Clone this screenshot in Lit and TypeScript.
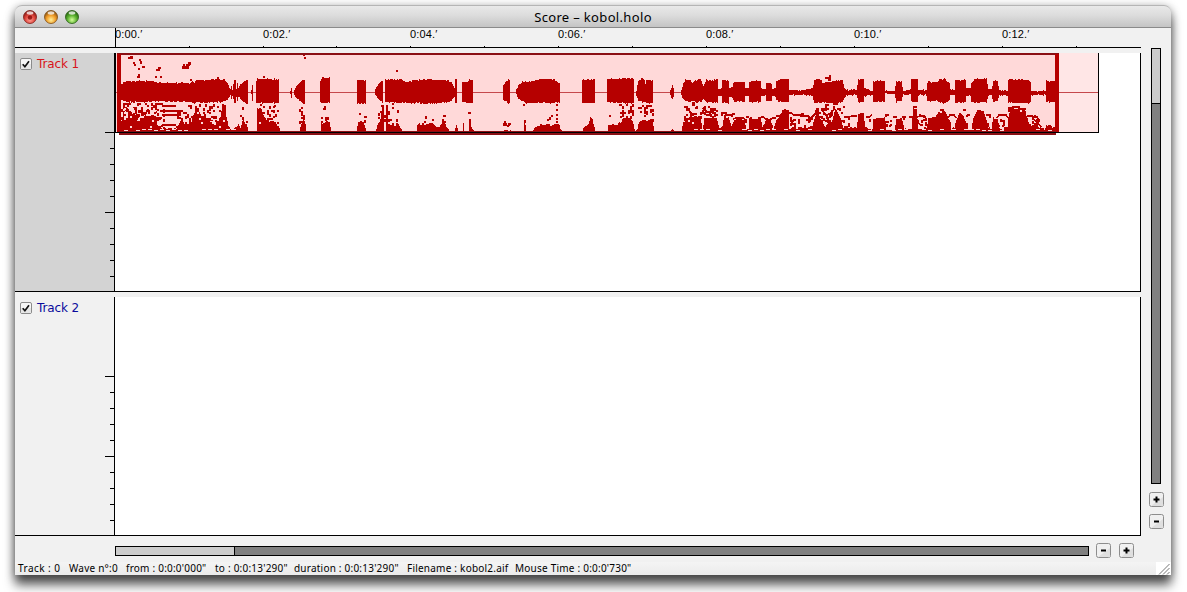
import { LitElement, html, css, svg } from "lit";
import { customElement, property } from "lit/decorators.js";

// Amplitude envelope: runs of (x, top, bottom) points, one run per burst of sound.
const ENVELOPE: number[][] = [
  [120,89,96, 121,85,100, 124,82,101, 127,81,102, 150,81,102, 157,83,101, 190,83,102, 192,81,103, 194,82,103, 195,80,102, 205,80,103, 218,79,102, 224,80,102, 227,83,100, 229,88,97, 230,89,95, 231,86,99, 232,90,95, 233,84,99, 234,80,103, 235,81,103, 236,89,97, 237,83,101, 238,88,97, 240,84,99, 242,83,101, 246,80,103, 248,80,103],
  [251,90,94, 252,84,101, 253,90,94],
  [256,81,103, 257,79,103, 279,79,103],
  [290,91,94, 291,88,98, 292,91,94],
  [294,90,95, 296,86,98, 299,83,100, 302,80,103, 303,80,104, 305,80,103],
  [320,80,102, 322,78,103, 329,78,103, 330,81,101],
  [357,80,104, 365,80,103, 366,82,102],
  [375,89,95, 378,84,99, 380,82,101, 383,81,103],
  [385,80,102, 400,79,103, 405,82,103, 418,80,103, 425,79,104, 440,80,103, 447,80,102, 451,83,101, 455,90,96],
  [455,79,103, 457,79,103],
  [462,82,102, 467,82,103, 469,80,103, 473,80,103],
  [503,85,100, 505,82,101, 508,80,103, 510,80,103],
  [516,90,95, 518,85,99, 523,81,102, 526,82,103, 540,79,103, 553,79,103, 558,82,102, 560,84,103],
  [582,80,103, 595,79,103],
  [607,79,102, 621,79,103, 622,78,103, 634,79,103],
  [636,90,96, 638,81,101, 642,78,102, 644,79,102, 645,84,102, 646,80,103, 653,80,103],
  [670,90,96, 672,84,100, 674,91,94],
  [681,90,95, 683,84,99, 685,80,101, 690,80,102, 692,83,101, 695,80,102, 701,80,102, 703,86,99, 706,80,102, 717,80,103, 718,89,96, 721,88,96, 722,80,103, 728,80,103, 729,88,97, 732,87,97, 733,83,100, 734,82,102, 744,82,102, 745,88,96, 748,88,96, 749,81,102, 760,81,102, 761,88,96, 765,89,96, 766,83,101, 771,83,101, 772,88,96, 775,88,96, 776,81,100, 779,79,102, 788,79,102, 789,90,95, 805,90,95, 812,88,96, 814,80,103, 820,79,103, 822,83,103, 835,81,103, 842,80,102, 844,88,98, 846,90,95, 856,90,95, 858,80,102, 863,79,102, 864,88,96, 872,91,95, 873,81,102, 884,81,102, 885,91,94, 894,91,94, 896,81,102, 901,82,101, 903,91,95, 910,90,95, 911,79,102, 917,79,102, 918,90,95, 926,90,95, 927,82,101, 937,82,101, 939,79,103, 944,79,103, 949,83,100, 950,89,96, 954,90,95, 955,80,103, 965,80,102, 966,88,96, 970,88,96, 971,82,102, 975,79,103, 986,79,102, 988,89,95, 991,89,95, 993,81,102, 997,81,101, 999,90,95, 1007,91,95, 1008,79,103, 1028,80,103, 1030,82,102, 1031,91,95, 1045,91,95, 1046,81,102, 1056,81,102],
];

// Top edge of the filled spectrum along the bottom of the clip: (x, y) pairs.
const SPECTRUM = [
  120,122, 123,118, 125,111, 127,107, 130,114, 134,124, 140,121, 145,116, 150,118, 155,121, 160,129, 176,129, 180,121, 186,124, 191,121, 195,108, 200,114, 205,115, 208,120, 215,125, 220,118, 222,105, 225,104, 226,118, 228,126, 232,129, 238,125, 240,128, 243,119, 246,125, 248,131, 256,131, 257,108, 261,110, 264,118, 270,122, 275,122, 279,128, 280,131, 299,131, 301,125, 303,119, 305,124, 306,131,
  320,131, 321,123, 327,121, 329,122, 331,131, 356,131, 358,121, 364,124, 366,131, 375,131, 377,124, 380,121, 382,107, 383,107, 384,131, 385,131, 386,107, 387,109, 388,125, 398,124, 402,131, 416,131, 417,125, 430,124, 438,127, 443,123, 448,128, 449,131, 454,131, 456,124, 458,131, 462,131, 463,124, 464,131, 468,131, 469,119, 470,119, 471,127, 474,131,
  503,131, 504,129, 510,130, 511,131, 523,131, 524,121, 526,131, 532,131, 535,126, 540,125, 558,125, 561,130, 562,131, 582,131, 583,127, 588,123, 590,116, 592,118, 593,123, 595,131, 607,131, 608,124, 618,124, 624,118, 630,117, 634,128, 635,131, 637,128, 640,121, 652,120, 654,131, 670,131, 672,129, 674,131,
  681,131, 683,123, 685,120, 690,117, 700,118, 702,129, 704,119, 716,119, 719,127, 722,125, 724,116, 728,118, 731,127, 734,120, 738,118, 744,119, 746,130, 748,129, 749,118, 760,118, 762,128, 766,119, 770,119, 772,130, 776,120, 780,117, 782,110, 788,110, 789,129, 812,127, 814,119, 816,113, 819,117, 825,126, 832,120, 835,109, 840,118, 843,127, 856,128, 858,115, 863,114, 865,128, 872,129, 873,119, 884,118, 886,130, 894,130, 896,118, 901,118, 904,129, 911,128, 913,108, 916,108, 918,129, 926,128, 928,119, 935,118, 939,112, 944,112, 949,120, 951,129, 954,128, 956,119, 960,112, 965,120, 968,129, 971,128, 973,118, 976,112, 983,112, 986,120, 988,129, 991,128, 993,118, 997,119, 999,129, 1007,129, 1008,118, 1010,108, 1024,111, 1027,118, 1031,127, 1036,125, 1040,128, 1044,129, 1046,125, 1052,127, 1056,125,
];

// Areas of scattered partials: x1, x2, y1, y2, share of cells set.
const CLOUDS = [
  [121,156,103,128,.44],[130,156,110,130,.4],[157,164,103,130,.3],[177,192,110,127,.4],[188,194,103,109,.45],[195,224,104,122,.36],
  [238,247,107,123,.24],[257,279,106,124,.27],[299,305,107,122,.32],[321,329,115,122,.38],[358,366,118,124,.3],[378,389,109,121,.26],
  [390,397,119,124,.3],[440,446,115,122,.2],[503,510,123,129,.16],[620,633,104,119,.48],[638,653,105,121,.3],[684,717,106,119,.33],
  [723,732,112,122,.32],[790,812,117,128,.22],[815,844,106,122,.33],[826,832,116,127,.3],[846,856,116,128,.14],[865,871,117,128,.28],
  [886,894,118,128,.16],[903,911,118,128,.16],[917,926,114,128,.22],[936,948,110,119,.2],[998,1007,117,128,.24],[1010,1026,108,118,.3],[1032,1040,115,127,.3],
];

// Thin partials bridging the gaps between notes.
const PARTIALS = [
  "M162 106h14M160 111h18M162 115h16M159 118h3M177 118h4M162 125h14M158 127h3M176 127h3",
  "M722 116v-3h4v2h5l2 -1h2M733 119l4 -1h6l3 2v3M746 117h3M761 117h2l3 2M771 119l2 -1h3M772 125v3M776 116h3l2 -1",
  "M788 113h3l3 2h5l4 -1h1M800 116h8l2 2v4M812 120v-3l3 -3M792 125v-3l2 -2",
  "M844 117h5l4 -1h4M849 123v4M860 114h4M866 117h3l3 -2M886 117v-2h3M885 122h4M889 126h2M893 117h4M902 117h4M902 122v6M909 117h5",
  "M917 117l4 -1h3l2 1M918 122l3 4M923 120h3M926 122v4M932 118h4M948 118l2 -3h4l2 3M950 122v5M966 117l2 -2h2M967 123v4M986 115h4v3M988 123v4M997 118l2 -3h7l2 3M1000 121h4v5",
  "M1009 112v-4h4v-1h6v2h3l3 3v4M1027 116h5l3 1h3M1034 119l3 4v4M1038 118v5l3 4M822 111l5 4 4 -2 3 -4M817 116l5 2M827 119l5 -3",
  "M684 107h3v3h2l2 4M689 112l4 2h4M695 108h3M703 108l4 4h5v-3h3M706 115h4v-2M833 104h5M825 105h4M815 111h4M816 109h3",
];

// Isolated partials: x, y, w, h.
const DOTS = [
  [128,57,5,2],[130,56,3,1],[133,62,2,2],[134,64,2,2],[139,59,2,2],[140,61,2,3],[142,66,3,2],[138,68,2,2],[138,74,2,2],[137,76,3,2],[158,67,3,2],[156,69,4,2],[155,76,2,2],[160,76,2,2],
  [188,62,3,3],[183,64,2,2],[182,66,7,3],[186,64,4,2],[190,79,2,2],[217,77,2,2],[263,76,2,2],[303,54,2,2],[304,57,2,2],[396,70,2,2],[829,75,2,2],[825,77,6,2],[828,79,3,2],
  [323,108,3,2],[324,106,2,2],[386,105,2,3],[392,103,2,2],[392,107,2,2],[397,110,2,3],[381,105,3,2],[425,116,2,3],[424,121,2,2],[432,119,2,2],[443,115,3,2],[442,119,2,2],[468,112,3,2],
  [504,121,2,2],[508,123,2,3],[523,104,2,2],[524,120,2,3],[549,117,2,3],[547,119,2,2],[551,115,2,2],[556,104,2,2],[556,109,2,2],[556,114,2,2],[556,118,2,2],[556,121,2,2],[609,115,2,2],[619,104,3,2],[692,102,3,4],
  [359,113,2,2],[364,116,3,2],[260,104,2,2],[269,106,2,3],[274,105,2,2],[913,106,4,2],[963,109,3,2],[940,109,4,2],[977,110,4,2],
];

const noise = (a: number, b: number) => {
  const v = Math.sin(a * 127.1 + b * 311.7) * 43758.5453;
  return v - Math.floor(v);
};

function envelopePath(): string {
  let d = "";
  for (const run of ENVELOPE) {
    for (let i = 0; i + 5 < run.length; i += 3) {
      const [x0, t0, b0, x1, t1, b1] = run.slice(i, i + 6);
      for (let x = x0; x < x1; x++) {
        const k = (x - x0) / (x1 - x0);
        const top = Math.round(t0 + (t1 - t0) * k + (noise(x, 1) - 0.5) * 1.3);
        const bottom = Math.round(b0 + (b1 - b0) * k + (noise(x, 2) - 0.5) * 1.3);
        d += `M${x} ${top}h1V${bottom}h-1z`;
      }
    }
  }
  return d;
}

function spectrumPath(): string {
  let d = "";
  for (let i = 0; i + 3 < SPECTRUM.length; i += 2) {
    const [x0, y0, x1, y1] = SPECTRUM.slice(i, i + 4);
    for (let x = x0; x < x1; x++) {
      const y = y0 + ((y1 - y0) * (x - x0)) / (x1 - x0);
      const lift = y < 130 ? (noise(x >> 1, 3) - 0.5) * 3 : 0;
      d += `M${x} ${Math.round(Math.min(131, y + lift))}h1V132h-1z`;
    }
  }
  for (const [x0, x1, y0, y1, share] of CLOUDS)
    for (let x = x0; x < x1; x += 2)
      for (let y = y0; y < y1; y += 2)
        if (noise(x, y) < share) d += `M${x} ${y}h2v${noise(y, x) > 0.5 ? 3 : 2}h-2z`;
  for (const [x, y, w, h] of DOTS) d += `M${x} ${y}h${w}v${h}h-${w}z`;
  return d;
}

function holesPath(): string {
  let d = "";
  const spans = [[124, 156, 108, 0.09], [195, 224, 112, 0.09], [257, 279, 116, 0.08], [684, 717, 120, 0.03]];
  for (const [x0, x1, y0, share] of spans)
    for (let x = x0; x < x1; x += 2)
      for (let y = y0; y < 128; y += 2) if (noise(x + 9, y + 5) < share) d += `M${x} ${y}h2v2h-2z`;
  for (let x = 124; x < 1050; x += 6)
    if ((x < 235 || x > 690) && noise(x, 8) < 0.6) d += `M${x} ${129 + (noise(x, 4) > 0.6 ? 1 : 0)}h4v1h-4z`;
  return d;
}

const ENVELOPE_D = envelopePath();
const SPECTRUM_D = spectrumPath();
const HOLES_D = holesPath();

@customElement("wave-clip")
class WaveClip extends LitElement {
  static styles = css`
    :host { display: block; }
    svg { display: block; }
    .rest { fill: #ffe6e6; }
    .sel { fill: #ffd9d9; }
    .red { fill: #b60000; }
    .dark { fill: #8a1015; }
    .line { fill: #c5484c; }
    .partial { fill: none; stroke: #b60000; stroke-width: 1.7; }
    .black { fill: #000; }
  `;
  render() {
    return html`<svg width="1025" height="90" viewBox="115 53 1025 90" shape-rendering="crispEdges">
      ${svg`
      <rect class="rest" x="1059" y="53" width="39" height="79"/>
      <rect class="sel" x="116" y="53" width="939" height="79"/>
      <rect class="line" x="116" y="92" width="982" height="1"/>
      <path class="red" d=${SPECTRUM_D}/>
      ${PARTIALS.map((d) => svg`<path class="partial" d=${d}/>`)}
      <path class="sel" d=${HOLES_D}/>
      <path class="red" d=${ENVELOPE_D}/>
      <rect class="dark" x="117" y="53" width="942" height="2"/>
      <rect class="red" x="117" y="54" width="4" height="78"/>
      <rect class="red" x="1055" y="54" width="4" height="78"/>
      <rect class="dark" x="119" y="131" width="937" height="4"/>
      <rect class="black" x="115" y="132" width="984" height="1"/>
      <rect class="black" x="1098" y="53" width="1" height="80"/>
      <rect class="black" x="115" y="53" width="1" height="80"/>`}
    </svg>`;
  }
}

@customElement("track-row")
class TrackRow extends LitElement {
  @property() label = "";
  @property({ type: Boolean, reflect: true }) selected = false;
  @property({ type: Number }) axis = 79;
  static styles = css`
    :host { display: grid; grid-template-columns: 100px 1fr; height: 239px; box-sizing: border-box;
      border-bottom: 1px solid #000; color: #0a0a9c; }
    :host([selected]) { color: #d8141a; }
    .head { display: grid; background: #f1f1f1; border-right: 1px solid #000; box-sizing: border-box; }
    :host([selected]) .head { background: #d3d3d3; }
    .name, .axis { grid-area: 1 / 1; }
    .name { display: flex; align-items: flex-start; gap: 5px; padding: 4px 0 0 5px;
      font: 12px/14px "DejaVu Sans", sans-serif; letter-spacing: -.13px; }
    .box { margin-top: 1px; }
    .lane { background: #fff; border-right: 1px solid #000; }
  `;
  render() {
    const ticks = Array.from({ length: 10 }, (_, i) => i);
    return html`<div class="head">
        <svg class="axis" width="99" height="238" shape-rendering="crispEdges">
          ${ticks.map((i) => {
            const len = i % 5 === 0 ? 9 : 4;
            return svg`<rect x=${99 - len} y=${this.axis + i * 16} width=${len} height="1"/>`;
          })}
        </svg>
        <div class="name">
          <svg class="box" width="12" height="12" viewBox="0 0 12 12">
            <rect x=".5" y=".5" width="11" height="11" rx="1.5" fill="#f6f6f6" stroke="#8b8b8b"/>
            <path d="M1 6h10v5H1z" fill="#e6e6e6"/>
            <path d="M2.7 6.2l2.2 2.5L9 3.2" fill="none" stroke="#111" stroke-width="1.7"/>
          </svg><span>${this.label}</span>
        </div>
      </div>
      <div class="lane"><slot></slot></div>`;
  }
}

@customElement("app-root")
class AppRoot extends LitElement {
  static styles = css`
    :host { display: block; box-sizing: border-box; width: 1187px; height: 592px; overflow: hidden;
      padding: 5px 16px 0 15px; background: #fff; }
    .window { display: grid; grid-template: 23px 20px 5px 239px 5px 239px 26px 13px / 1126px 30px;
      background: #f1f1f1; border-radius: 7px 7px 0 0;
      box-shadow: 0 10px 11px rgba(0,0,0,.62), 0 2px 10px rgba(0,0,0,.4); }
    .title { grid-area: 1 / 1 / 2 / 3; display: grid; grid-template-columns: 64px 1fr 64px; align-items: center;
      box-sizing: border-box; border-top: 1px solid #b5b5b5; border-bottom: 1px solid #8a8a8a;
      border-radius: 7px 7px 0 0; background: linear-gradient(#e9e9e9, #dcdcdc 45%, #c4c4c4); }
    .lights { display: block; margin-left: 7px; }
    .caption { text-align: center; white-space: nowrap; font: 13px/20px "Noto Sans", sans-serif;
      letter-spacing: .34px; color: #000; }
    .ruler { grid-area: 2 / 1; border-bottom: 1px solid #000; }
    .ruler text { font: 11px "Liberation Sans", sans-serif; letter-spacing: .15px; }
    .t1 { grid-area: 4 / 1; } .t2 { grid-area: 6 / 1; }
    .side { grid-area: 2 / 2 / 7 / 3; display: flex; flex-direction: column; align-items: center; padding-top: 20px; }
    .bar { box-sizing: border-box; border: 1px solid #000; background: #808080; display: flex; }
    .thumb { background: #ccc; }
    .bar.v { width: 10px; height: 436px; flex-direction: column; margin-bottom: 8px; }
    .v .thumb { height: 54px; border-bottom: 1px solid #000; }
    .btn { display: block; flex: none; }
    .side .btn + .btn { margin-top: 7px; }
    .bottom { grid-area: 7 / 1 / 8 / 3; display: flex; align-items: flex-start; padding: 7px 0 0 100px; }
    .bar.h { width: 974px; height: 10px; margin: 3px 7px 0 0; }
    .h .thumb { width: 118px; border-right: 1px solid #000; }
    .bottom .btn + .btn { margin-left: 8px; }
    .status { grid-area: 8 / 1 / 9 / 3; display: flex; background: linear-gradient(#f4f4f4, #ebebeb); }
    .fields { flex: 1; display: grid; padding-left: 3px; white-space: nowrap;
      grid-template-columns: 51px 57px 89px 79px 113px 108px 1fr;
      font: 10px/13px "Noto Sans", sans-serif; letter-spacing: .22px; color: #000; }
    .fields span:first-child { letter-spacing: .45px; }
  `;

  private button(plus: boolean) {
    return html`<svg class="btn" width="15" height="15" viewBox="0 0 15 15">
      <rect x=".5" y=".5" width="14" height="14" rx="2" fill="#f0f0f0" stroke="#8d8d8d"/>
      <path d="M2 14L14 5v9z" fill="#dfdfdf"/>
      <path d=${plus ? "M4.5 7.5h6M7.5 4.5v6" : "M5 7.5h5"} stroke="#000" stroke-width="2"/>
    </svg>`;
  }

  render() {
    const lights = [["r", "#e0453c", "#ff9d92", "#7d1712"], ["y", "#f09a26", "#fff09a", "#7d4b10"], ["g", "#57ae2c", "#d4ff9a", "#235b10"]];
    const marks = Array.from({ length: 14 }, (_, i) => i);
    const fields = ["Track : 0", "Wave n°:0", "from : 0:0:0'000\"", "to : 0:0:13'290\"", "duration : 0:0:13'290\"", "Filename : kobol2.aif", "Mouse Time : 0:0:0'730\""];
    return html`<div class="window">
      <div class="title">
        <svg class="lights" width="58" height="16" viewBox="0 0 58 16">
          <defs>${lights.map(([id, mid, glow, edge]) => svg`
            <radialGradient id=${id} cx=".5" cy=".72" r=".68">
              <stop offset="0" stop-color=${glow}/><stop offset=".55" stop-color=${mid}/><stop offset="1" stop-color=${edge}/>
            </radialGradient>`)}</defs>
          ${lights.map(([id, , , edge], i) => svg`
            <circle cx=${8 + i * 21} cy="8" r="6.5" fill=${`url(#${id})`} stroke=${edge} stroke-width=".8"/>
            <ellipse cx=${8 + i * 21} cy="4" rx="3.4" ry="1.7" fill="#fff" opacity=".75"/>`)}
          <circle cx="8" cy="8.5" r="2.2" fill="#8c0d0b" opacity=".85"/>
        </svg>
        <div class="caption">Score – kobol.holo</div>
      </div>
      <div class="ruler">
        <svg width="1126" height="19" viewBox="15 28 1126 19">
          <rect x="115" y="28" width="1" height="19"/>
          ${marks.map((i) => svg`<rect x=${Math.round(114.6 + i * 73.95)} y="46" width="1" height="1"/>`)}
          ${marks.filter((i) => i % 2 === 0).map((i) => svg`<text x=${Math.round(114.6 + i * 73.95)} y="38">${`0:${String(i).padStart(2, "0")}.′`}</text>`)}
        </svg>
      </div>
      <track-row class="t1" label="Track 1" selected .axis=${79}><wave-clip></wave-clip></track-row>
      <track-row class="t2" label="Track 2" .axis=${79}></track-row>
      <div class="side">
        <div class="bar v"><div class="thumb"></div></div>
        ${this.button(true)}${this.button(false)}
      </div>
      <div class="bottom">
        <div class="bar h"><div class="thumb"></div></div>
        ${this.button(false)}${this.button(true)}
      </div>
      <div class="status">
        <div class="fields">${fields.map((f) => html`<span>${f}</span>`)}</div>
        <svg width="15" height="13" viewBox="0 0 15 13">
          <rect width="15" height="13" fill="#fff"/>
          <path d="M3 12.5L13.5 2M7 12.5L13.5 6M11 12.5l2.500-2.500" stroke="#777" fill="none"/>
        </svg>
      </div>
    </div>`;
  }
}
